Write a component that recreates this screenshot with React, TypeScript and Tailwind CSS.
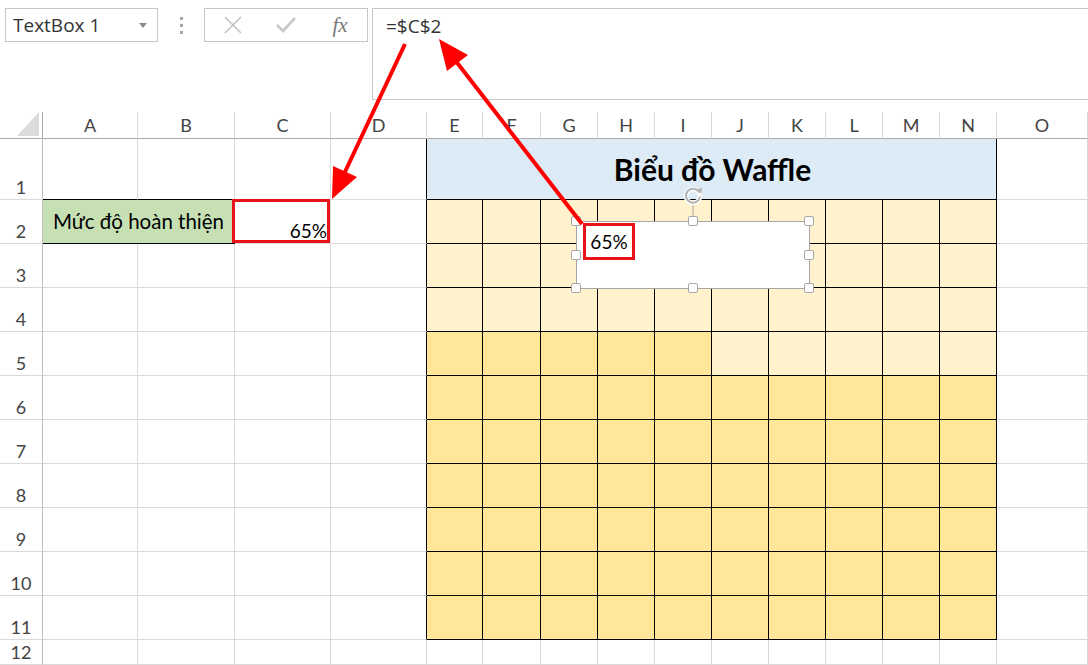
import React from 'react';

const COLS = ['A', 'B', 'C', 'D', 'E', 'F', 'G', 'H', 'I', 'J', 'K', 'L', 'M', 'N', 'O'];
const WAFFLE_COLS = ['E', 'F', 'G', 'H', 'I', 'J', 'K', 'L', 'M', 'N'];
const FILLED = 65;

const cellFont = { fontFamily: 'Lato, "Open Sans", sans-serif' };
const uiFont = { fontFamily: '"Open Sans", "Noto Sans", sans-serif' };

function FormulaBar() {
    return (
        <div className="h-[112px] flex items-start pt-[8px]" style={uiFont}>
            <div className="ml-[5px] w-[153px] h-[34px] border border-[#c6c6c6] flex items-center justify-between pl-[7px] pr-[10px]">
                <span className="text-[19px] text-[#333] leading-none">TextBox 1</span>
                <svg width="8" height="5" viewBox="0 0 8 5">
                    <path d="M0 0 L8 0 L4 5 Z" fill="#8a8a8a" />
                </svg>
            </div>
            <div className="w-[46px] h-[34px] flex flex-col items-center justify-center gap-[4px]">
                <span className="w-[3px] h-[3px] bg-[#a8a8a8]" />
                <span className="w-[3px] h-[3px] bg-[#a8a8a8]" />
                <span className="w-[3px] h-[3px] bg-[#a8a8a8]" />
            </div>
            <div className="w-[164px] h-[34px] border border-[#c6c6c6] flex items-center">
                <div className="w-[54px] flex justify-center pl-[2px]">
                    <svg width="20" height="20" viewBox="0 0 20 20">
                        <path d="M2 2 L18 18 M18 2 L2 18" stroke="#c2c2c2" strokeWidth="1.6" />
                    </svg>
                </div>
                <div className="w-[54px] flex justify-center">
                    <svg width="22" height="18" viewBox="0 0 22 18">
                        <path d="M2 9 L8 15 L20 2" stroke="#c8c8c8" strokeWidth="2.6" fill="none" />
                    </svg>
                </div>
                <div className="flex-1 flex justify-center">
                    <span
                        className="text-[21px] italic text-[#777] leading-none"
                        style={{ fontFamily: '"Liberation Serif", "DejaVu Serif", serif' }}
                    >
                        fx
                    </span>
                </div>
            </div>
            <div className="ml-[4px] flex-1 h-[92px] border-t border-l border-b border-[#c6c6c6] pl-[13px] pt-[3px]">
                <span className="text-[19px] text-[#333]">=$C$2</span>
            </div>
        </div>
    );
}

function Corner() {
    return (
        <div className="border-r border-b border-[#ababab] flex items-end justify-end pr-[3px] pb-[2px]">
            <svg width="22" height="24" viewBox="0 0 22 24">
                <path d="M22 0 L22 24 L0 24 Z" fill="#dcdcdc" />
            </svg>
        </div>
    );
}

function RowHead({ n }: { n: number }) {
    return (
        <div className="border-r border-b border-r-[#bdbdbd] border-b-[#d9d9d9] flex items-end justify-center pb-[1px]">
            <span className="text-[18px] text-[#444] leading-[22px]">{n}</span>
        </div>
    );
}

function Cell({ className = '' }: { className?: string }) {
    return <div className={`border-r border-b border-[#dadada] ${className}`} />;
}

export default function App() {
    const rows: React.ReactNode[] = [];

    // column headers
    rows.push(<Corner key="corner" />);
    COLS.forEach((c) => {
        rows.push(
            <div key={`h-${c}`} className="border-r border-b border-r-[#dadada] border-b-[#ababab] flex items-center justify-center">
                <span className="text-[18px] text-[#444] leading-none">{c}</span>
            </div>
        );
    });

    // row 1
    rows.push(<RowHead key="r1" n={1} />);
    rows.push(<Cell key="A1" className="!border-b-black" />);
    rows.push(<Cell key="B1" className="!border-b-black" />);
    rows.push(<Cell key="C1" />);
    rows.push(<Cell key="D1" className="!border-r-black" />);
    rows.push(
        <div key="title" className="col-span-10 bg-[#ddebf7] border-r border-b border-black flex items-center justify-center pl-[2px]">
            <span className="text-[30px] font-bold text-black leading-none">Biểu đồ Waffle</span>
        </div>
    );
    rows.push(<Cell key="O1" />);

    // rows 2..11
    for (let r = 2; r <= 11; r++) {
        rows.push(<RowHead key={`r${r}`} n={r} />);
        if (r === 2) {
            rows.push(
                <div key="A2" className="col-span-2 bg-[#c6e0b4] border-b border-black flex items-center pl-[10px]">
                    <span className="text-[20.5px] text-black leading-none">Mức độ hoàn thiện</span>
                </div>
            );
            rows.push(
                <div key="C2" className="relative border-r border-b border-[#dadada] flex items-end justify-end pr-[3px] pb-[3px]">
                    <div className="absolute -left-[3px] -top-[1px] right-0 bottom-0 border-[3px] border-[#e8141c]" />
                    <span className="text-[19px] text-black leading-none">65%</span>
                </div>
            );
        } else {
            rows.push(<Cell key={`A${r}`} />);
            rows.push(<Cell key={`B${r}`} />);
            rows.push(<Cell key={`C${r}`} />);
        }
        rows.push(<Cell key={`D${r}`} className="!border-r-black" />);
        WAFFLE_COLS.forEach((c, ci) => {
            // rows fill from the bottom, the partial row fills left to right
            const filled = (11 - r) * 10 + ci < FILLED;
            rows.push(
                <div
                    key={`${c}${r}`}
                    className={`border-r border-b border-black ${filled ? 'bg-[#ffe699]' : 'bg-[#fff2cc]'}`}
                />
            );
        });
        rows.push(<Cell key={`O${r}`} />);
    }

    // row 12
    rows.push(<RowHead key="r12" n={12} />);
    COLS.forEach((c) => rows.push(<Cell key={`${c}12`} />));

    return (
        <div className="relative w-[1088px] h-[665px] overflow-hidden bg-white select-none" style={cellFont}>
            <FormulaBar />
            <div className="grid grid-cols-[43px_95px_97px_96px_96px_56px_58px_57px_57px_57px_57px_57px_57px_57px_57px_1fr] grid-rows-[27px_61px_repeat(10,44px)_25px]">
                {rows}
            </div>

            {/* selected text box */}
            <div className="absolute left-[576px] top-[221px] w-[234px] h-[68px] bg-white border border-[#a6a6a6]">
                <div className="absolute left-[6px] top-[1px] w-[52px] h-[37px] border-[3px] border-[#e8141c] flex items-center justify-center">
                    <span className="text-[19px] text-black leading-none">65%</span>
                </div>
            </div>
            {[
                [576, 221], [693, 221], [809, 221],
                [576, 255], [809, 255],
                [576, 288], [693, 288], [809, 288],
            ].map(([x, y]) => (
                <div
                    key={`${x}-${y}`}
                    className="absolute w-[10px] h-[10px] bg-white border border-[#a6a6a6] rounded-[2px]"
                    style={{ left: x - 5, top: y - 5 }}
                />
            ))}
            <svg className="absolute left-[679px] top-[184px]" width="28" height="34" viewBox="0 0 28 34">
                <path d="M14 20 L14 33" stroke="#a6a6a6" strokeWidth="1" />
                <circle cx="14" cy="12" r="7" stroke="#ffffff" strokeWidth="4.5" fill="none" />
                <path d="M20.3 8.5 A7 7 0 1 0 21 12.5" stroke="#b4b4b4" strokeWidth="2" fill="none" />
                <path d="M16.5 6 L22.5 9.5 L23 3.5 Z" fill="#b4b4b4" />
            </svg>

            {/* red arrows */}
            <svg className="absolute left-0 top-0 pointer-events-none" width="1088" height="665" viewBox="0 0 1088 665">
                <line x1="405" y1="44" x2="344" y2="174" stroke="#ff0000" strokeWidth="4" />
                <polygon points="332,199 357,177 333,166" fill="#ff0000" />
                <line x1="582" y1="224" x2="455" y2="60" stroke="#ff0000" strokeWidth="4" />
                <polygon points="439,39 468,55 447,71" fill="#ff0000" />
            </svg>
        </div>
    );
}
